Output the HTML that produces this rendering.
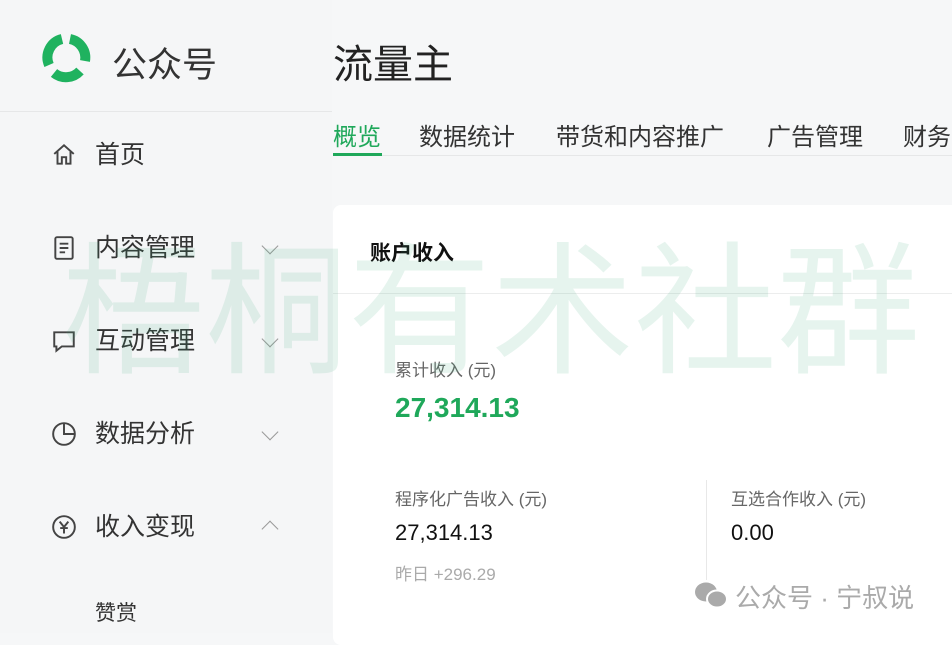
<!DOCTYPE html>
<html><head><meta charset="utf-8"><style>
*{margin:0;padding:0;box-sizing:border-box}
body{width:952px;height:633px;overflow:hidden;background:#f6f7f8;font-family:"Liberation Sans","Noto Sans CJK SC",sans-serif;position:relative;color:#333}
.a{position:absolute;white-space:nowrap}
.side{position:absolute;left:0;top:0;width:332px;height:633px;background:#f5f6f7}
.nav{font-size:25px;color:#333;line-height:1}
.chev{position:absolute;width:12px;height:12px;border-right:1.6px solid #999;border-bottom:1.6px solid #999;transform:rotate(45deg)}
.card{position:absolute;left:333px;top:205px;width:640px;height:440px;background:#fff;border-radius:8px}
.tab{position:absolute;top:117px;font-size:24px;color:#333;white-space:nowrap}
</style></head><body>
<div class="side"></div>
<svg class="a" style="left:40px;top:31px" width="52" height="52" viewBox="0 0 52 52">
<g fill="none" stroke="#1fb25f" stroke-width="10" stroke-linecap="butt">
<path d="M9 34 A19 19 0 0 1 22 8"/>
<path d="M30 8 A19 19 0 0 1 45 30"/>
<path d="M40 40 A19 19 0 0 1 14 42"/>
</g></svg>
<div class="a" style="left:112px;top:37px;font-size:35px;color:#333">公众号</div>
<div class="a" style="left:0;top:111px;width:332px;height:1px;background:#e6e7e8"></div>
<div class="a" style="left:333px;top:32px;font-size:40px;color:#222">流量主</div>

<div class="tab" style="left:333px;color:#1fa85a">概览</div>
<div class="a" style="left:333px;top:153px;width:49px;height:3px;background:#1fa85a"></div>
<div class="a" style="left:382px;top:155px;width:570px;height:1px;background:#e6e7e8"></div>
<div class="tab" style="left:419px">数据统计</div>
<div class="tab" style="left:556px">带货和内容推广</div>
<div class="tab" style="left:767px">广告管理</div>
<div class="tab" style="left:903px">财务</div>

<svg class="a" style="left:51px;top:142px" width="26" height="26" viewBox="0 0 24 24" fill="none" stroke="#444" stroke-width="1.8"><path d="M3 11L12 3l9 8M6 9v11h4v-6h4v6h4V9"/></svg>
<div class="a nav" style="left:95px;top:143px">首页</div>
<svg class="a" style="left:51px;top:235px" width="26" height="26" viewBox="0 0 24 24" fill="none" stroke="#444" stroke-width="1.8"><rect x="4" y="2" width="16" height="20" rx="1.5"/><path d="M8 8h8M8 12h8M8 16h5"/></svg>
<div class="a nav" style="left:95px;top:236px">内容管理</div>
<div class="chev" style="left:264px;top:240px"></div>
<svg class="a" style="left:51px;top:328px" width="26" height="26" viewBox="0 0 24 24" fill="none" stroke="#444" stroke-width="1.8"><path d="M3 4h18v13H10l-5 4v-4H3z"/></svg>
<div class="a nav" style="left:95px;top:329px">互动管理</div>
<div class="chev" style="left:264px;top:333px"></div>
<svg class="a" style="left:51px;top:421px" width="26" height="26" viewBox="0 0 24 24" fill="none" stroke="#444" stroke-width="1.8"><circle cx="12" cy="12" r="10"/><path d="M12 2v10h10"/></svg>
<div class="a nav" style="left:95px;top:422px">数据分析</div>
<div class="chev" style="left:264px;top:426px"></div>
<svg class="a" style="left:51px;top:514px" width="26" height="26" viewBox="0 0 24 24" fill="none" stroke="#444" stroke-width="1.8"><circle cx="12" cy="12" r="10"/><path d="M8 7l4 5 4-5M12 12v6M8.5 13h7"/></svg>
<div class="a nav" style="left:95px;top:515px">收入变现</div>
<div class="chev" style="left:264px;top:523px;transform:rotate(225deg)"></div>
<div class="a" style="left:95px;top:597px;font-size:21px;color:#333">赞赏</div>

<div class="card"></div>
<div class="a" style="left:370px;top:237px;font-size:21px;font-weight:bold;color:#111">账户收入</div>
<div class="a" style="left:333px;top:293px;width:619px;height:1px;background:#eceded"></div>
<div class="a" style="left:395px;top:356px;font-size:17px;color:#666">累计收入 (元)</div>
<div class="a" style="left:395px;top:392px;font-size:28px;font-weight:bold;color:#1fa85a">27,314.13</div>
<div class="a" style="left:395px;top:485px;font-size:17px;color:#666">程序化广告收入 (元)</div>
<div class="a" style="left:395px;top:520px;font-size:22px;color:#111">27,314.13</div>
<div class="a" style="left:395px;top:560px;font-size:17px;color:#aaa">昨日 +296.29</div>
<div class="a" style="left:706px;top:480px;width:1px;height:100px;background:#e8e8e8"></div>
<div class="a" style="left:731px;top:485px;font-size:17px;color:#666">互选合作收入 (元)</div>
<div class="a" style="left:731px;top:520px;font-size:22px;color:#111">0.00</div>

<div class="a" style="left:62px;top:235px;font-size:143px;color:rgba(60,170,120,0.13);line-height:1.1">梧桐有术社群</div>

<svg class="a" style="left:693px;top:580px" width="36" height="30" viewBox="0 0 36 30"><ellipse cx="13" cy="12" rx="11" ry="9.5" fill="#aaa"/><ellipse cx="24" cy="19" rx="10" ry="8.5" fill="#aaa" stroke="#fff" stroke-width="2"/></svg>
<div class="a" style="left:735px;top:578px;font-size:26px;color:#aaa">公众号 · 宁叔说</div>
</body></html>
